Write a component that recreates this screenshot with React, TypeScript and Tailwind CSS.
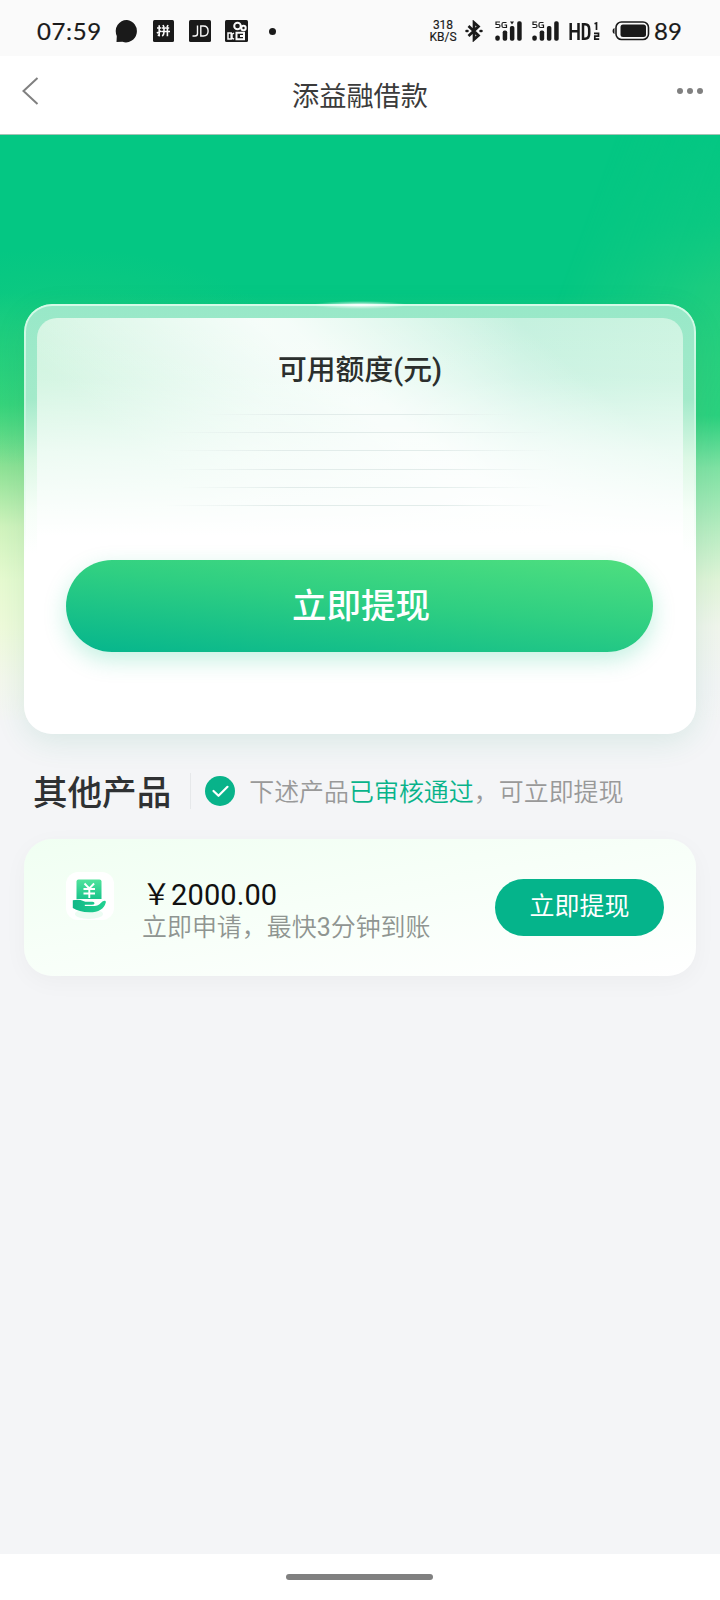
function StatusBar() {
  return (
    <header className="flex h-14 shrink-0 items-center bg-[#fafafa] pl-[37px] text-[#1a1a1a]">
      <span className="w-[66px] pt-[5px] font-[Lato,sans-serif] text-[24px] leading-none tracking-[0.6px] [-webkit-text-stroke:0.2px_#1a1a1a]">07:59</span>
      <svg className="mt-1.5 ml-[12px]" width="23" height="23" viewBox="0 0 23 23" fill="currentColor">
        <path d="M12 0A11 11.200 0 1 1 7.500 21.800L1.500 22 1.800 16A11 11.200 0 0 1 12 0Z" />
      </svg>
      <svg className="mt-1.5 ml-[15px]" width="21" height="22" viewBox="0 0 21 22">
        <rect width="21" height="22" rx="1.500" fill="#1a1a1a" />
        <path d="M4 8h4.200M3.800 13l4.400-2M6.200 5.200V15.500l-1.500-.3M10 5l1 2.200M15 5l-1 2.200M8.800 8h7.400M8.500 11.500h8.500M11 8v4q0 2.800-1.800 4M14.400 8v8.200" stroke="#fafafa" strokeWidth="1.600" fill="none" />
      </svg>
      <svg className="mt-1.5 ml-[15px]" width="22" height="22" viewBox="0 0 22 22">
        <rect width="22" height="22" rx="1.500" fill="#1a1a1a" />
        <path d="M8.500 5.500v8q0 2.500-2.500 2.500H3.500M11.800 6v10h2.500q4.800 0 4.800-5t-4.800-5z" stroke="#fafafa" strokeWidth="1.400" fill="none" />
      </svg>
      <svg className="mt-1.5 ml-3.5" width="23" height="22" viewBox="0 0 23 22">
        <rect width="23" height="22" rx="1.500" fill="#1a1a1a" />
        <g stroke="#fafafa" strokeWidth="2" fill="none">
          <circle cx="12.500" cy="6" r="3.300" />
          <circle cx="18.500" cy="8" r="2.200" />
          <path d="M11.500 12.800h7.500v6.400h-7.500zM15 16h4" />
          <path d="M9 13.200l-2 1v4l2 1M3 13v6h3.200v-6z" strokeWidth="1.500" />
        </g>
      </svg>
      <span className="mt-1.5 ml-[21px] size-[7px] rounded-full bg-[#1a1a1a]" />
      <div className="mt-1.5 ml-[153px] flex w-7 flex-col items-center font-[Roboto,sans-serif] text-[12px] leading-[12px] [-webkit-text-stroke:0.150px_#1a1a1a]">
        <span>318</span>
        <span>KB/S</span>
      </div>
      <svg className="mt-1.5 ml-[8px]" width="18" height="22" viewBox="0 0 18 22" fill="none" stroke="currentColor">
        <path d="M3.500 6l10 9.500L9 19.500V2.500L13.500 6.500l-10 9.500" strokeWidth="2.700" />
        <path d="M1.500 11h1M15.500 11h1" strokeWidth="2.500" strokeLinecap="round" />
      </svg>
      <Signal className="ml-3" marker />
      <Signal className="ml-2.5" />
      <svg className="mt-1.5 ml-[10px]" width="31" height="19" viewBox="0 0 31 19" fill="none" stroke="currentColor">
        <path d="M1.700 1v17M9.500 1v17M1.700 9.200h7.800M14 2.200v14.600h2q4.200 0 4.200-5V7.200q0-5-4.200-5z" strokeWidth="2.500" />
        <path d="M25.500 1.800l2-.8v7M25 11.300h4.500v2.800h-3.700v3h4.400" strokeWidth="1.700" />
      </svg>
      <svg className="mt-1.5 ml-3" width="38" height="20" viewBox="0 0 38 20">
        <path d="M2.500 7v6Q.5 12.500.5 10t2-3Z" fill="#1a1a1a" />
        <rect x="4" y="1" width="32.500" height="17.500" rx="5.500" fill="none" stroke="#1a1a1a" strokeWidth="1.600" />
        <rect x="8.500" y="3.500" width="25.500" height="12.500" rx="2.500" fill="#1a1a1a" />
      </svg>
      <span className="ml-[4px] pt-[5px] font-[Lato,sans-serif] text-[24px] leading-none [-webkit-text-stroke:0.200px_#1a1a1a]">89</span>
    </header>
  );
}

function Signal({ className, marker }: { className: string; marker?: boolean }) {
  return (
    <svg className={`mt-1.5 ${className}`} width="27" height="20" viewBox="0 0 27 20" fill="#1a1a1a">
      <path d="M5 1H1v2.500h2.500Q5 3.500 5 5T3.500 6.500H.5M11.500 1.500H8.500Q7 1.500 7 3v2q0 1.500 1.500 1.500h3V4H9.500" fill="none" stroke="#1a1a1a" strokeWidth="1.200" />
      {marker && <path d="M15 .5h4l-2 3z" />}
      <rect x="0.300" y="14.500" width="4.500" height="5.200" rx="2" />
      <rect x="7.700" y="9.500" width="4.500" height="10.200" rx="1.800" />
      <rect x="14.900" y="5" width="4.500" height="14.700" rx="1.800" />
      <rect x="22.200" y="0.300" width="4.500" height="19.400" rx="1.800" />
    </svg>
  );
}

const lines = ["w-[310px]", "w-[390px]", "w-[390px]", "w-[380px]", "w-[360px]", "w-[390px]"];

function CreditCard() {
  return (
    <section className="relative mx-6 h-[430px] rounded-[28px] bg-[linear-gradient(180deg,#98e8c8_0%,#a3eaca_22%,#dcf8e5_36%,#f6fef8_48%,#ffffff_58%)] shadow-[0_8px_30px_rgba(30,150,110,0.12)]">
      <div className="absolute inset-0 rounded-[28px] border-2 border-[#d5fae7] [mask-image:linear-gradient(#000,transparent_60%)]" />
      <div className="absolute -top-[3px] left-1/2 h-[8px] w-24 -translate-x-1/2 bg-[radial-gradient(closest-side,#fff,#ffffff80_45%,transparent)]" />
      <div className="flex h-full flex-col items-center px-[13px] pt-[14px]">
        <div className="flex h-[242px] w-full flex-col items-center rounded-t-[20px] bg-[linear-gradient(180deg,transparent_0%,#ffffff20_25%,#ffffffa0_55%,#fff_90%),linear-gradient(40deg,transparent_25%,#ffffffc0_54%,#ffffffc0_57%,transparent_82%),linear-gradient(90deg,#cff4df,#d9f6e8_35%,#c5f1df_75%,#cdf4e1)]">
          <h2 className="mt-[30px] text-[28.800px] leading-[44px] font-medium text-[#2b2f2d]">可用额度(元)</h2>
          <div className="mt-[22px] flex flex-col items-center gap-[17.200px]">
            {lines.map((width, i) => (
              <span key={i} className={`h-px bg-[linear-gradient(90deg,transparent,#e2ecea_30%,#e2ecea_70%,transparent)] ${width}`} />
            ))}
          </div>
        </div>
        <button className="-ml-0.5 h-[92px] w-[587px] rounded-full bg-[linear-gradient(186deg,#4fdf7f_0%,#2fcf82_45%,#05b58d_100%)] pt-[2px] pl-1 text-[34.560px] font-medium text-white shadow-[0_8px_22px_rgba(20,200,140,0.25)]">立即提现</button>
      </div>
    </section>
  );
}

function MoneyIcon() {
  return (
    <svg width="48" height="54" viewBox="0 0 48 54" className="-mt-[18px] shrink-0">
      <defs>
        <linearGradient id="note" x1="0" y1="0" x2="0" y2="1">
          <stop stopColor="#52e39c" />
          <stop offset="1" stopColor="#18c48b" />
        </linearGradient>
        <linearGradient id="hand" x1="0" y1="0" x2="1" y2="0">
          <stop stopColor="#10b887" />
          <stop offset="1" stopColor="#22d190" />
        </linearGradient>
      </defs>
      <rect width="48" height="48" rx="12" fill="#fff" />
      <ellipse cx="23" cy="42" rx="14" ry="5" fill="#c9f6dd" opacity="0.350" />
      <path d="M12.500 7.500h21q2 0 2 2v17.500H10.500V9.500q0-2 2-2z" fill="url(#note)" />
      <path d="M18.500 11.500l4.800 5 4.800-5M17.500 17h11.500M17.500 21.500h11.500M23.300 16.500V26" stroke="#fff" strokeWidth="1.900" fill="none" />
      <path d="M6.800 28.300q6-1.300 10.500.6l2 .9h7q2.500.2 2.200 1.700-.3 1.200-2.700 1.200h-7v1.300h9.500q4 0 6.500-3 2.300-2.500 4.300-2.200 1.100.4.700 1.700-2.500 9.800-16.300 9.800Q12.800 40 6.800 36z" fill="url(#hand)" />
    </svg>
  );
}

export default function App() {
  return (
    <div className="flex h-[1600px] w-[720px] flex-col overflow-hidden bg-[#f4f5f7] font-[Roboto,'Noto_Sans_CJK_SC',sans-serif]">
      <StatusBar />
      <nav className="flex h-[79px] shrink-0 items-center justify-between border-b border-[#a5c4b6] bg-white px-[17px] text-[#808080]">
        <svg className="-mt-2 ml-[5px]" width="17" height="28" viewBox="0 0 17 28" fill="none" stroke="currentColor" strokeWidth="2">
          <path d="M15.500 1L1.500 14l14 13" />
        </svg>
        <h1 className="pt-1.5 pl-1 text-[27.200px] leading-none text-[#3b3b3b]">添益融借款</h1>
        <div className="-mt-2 flex gap-1">
          <i className="size-1.5 rounded-full bg-current" />
          <i className="size-1.5 rounded-full bg-current" />
          <i className="size-1.5 rounded-full bg-current" />
        </div>
      </nav>
      <main className="flex grow flex-col">
        <div className="relative h-[585px] shrink-0 bg-[radial-gradient(240px_110px_at_8%_38%,#25cf7b90,transparent),linear-gradient(180deg,#04c783_0%,#04c783_27%,#3dd57b_46%,#8fe296_57%,#d0f3bd_67%,#e6fad0_76%,#eefada_84%,#f3f7ec_93%,#f4f5f5_100%)] pt-[169px]">
          <div className="absolute inset-0 bg-[linear-gradient(180deg,#04c783_0%,#10c981_15%,#24ce7e_26%,#2bd07e_48%,#80e2a4_57%,#b5ecc0_67%,#e0f4d8_76%,#f0f5ec_84%,#f2f4f5_94%,#f4f5f6_100%)] [mask-image:linear-gradient(110deg,transparent_66%,#000_88%)]" />
          <CreditCard />
        </div>
        <div className="mt-[46px] flex h-12 items-center pl-[33px]">
          <h2 className="pt-[5px] text-[34.560px] leading-[48px] font-medium text-[#2f3133]">其他产品</h2>
          <span className="mt-0.5 ml-[19px] h-9 w-px bg-[#e6e8ea]" />
          <svg className="mt-px ml-3.5" width="30" height="30" viewBox="0 0 30 30">
            <circle cx="15" cy="15" r="15" fill="#08b38a" />
            <path d="M8.500 15l5 4.800 9-9" stroke="#fff" strokeWidth="2.200" strokeLinecap="round" strokeLinejoin="round" fill="none" />
          </svg>
          <p className="ml-[14px] pt-[5px] text-[24.960px] leading-[36px] font-[350] text-[#999]">
            下述产品<span className="text-[#08b38a]">已审核通过</span>，可立即提现
          </p>
        </div>
        <section className="mx-6 mt-[25px] flex h-[137px] shrink-0 items-center rounded-[28px] bg-[linear-gradient(170deg,#f0fff2_0%,#f7fff8_45%,#ffffff_100%)] pr-8 pl-[42px] shadow-[0_6px_24px_rgba(0,0,0,0.035)]">
          <MoneyIcon />
          <div className="ml-[28px] grow pt-[6px]">
            <div className="text-[29px] leading-[34px] tracking-[0.100px] text-[#111]">￥2000.00</div>
            <div className="text-[24.960px] leading-[32px] font-[350] text-[#8f9591]">
              立即申请，最快<span className="font-normal">3</span>分钟到账
            </div>
          </div>
          <button className="h-[57px] w-[169px] rounded-full bg-[#05b48b] text-[24.960px] leading-none text-white">立即提现</button>
        </section>
      </main>
      <footer className="flex h-[46px] shrink-0 items-center justify-center bg-white">
        <span className="-ml-0.5 h-1.5 w-[147px] rounded-full bg-[#808080]" />
      </footer>
    </div>
  );
}
